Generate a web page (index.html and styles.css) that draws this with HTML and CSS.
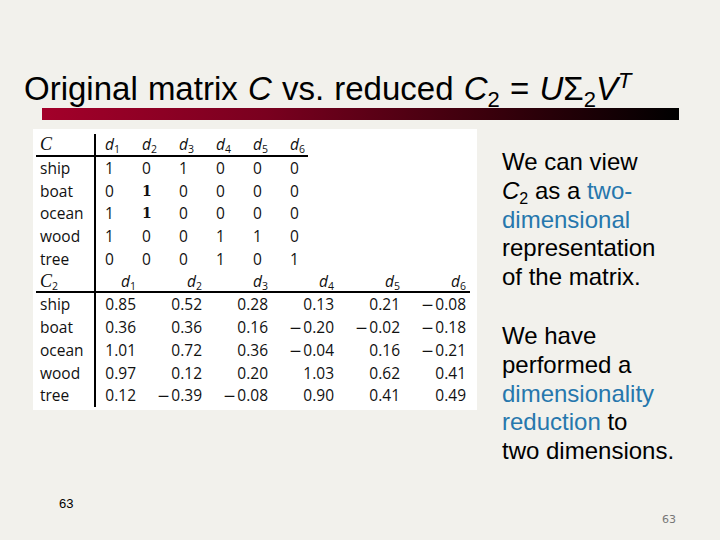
FILE: index.html
```html
<!DOCTYPE html>
<html>
<head>
<meta charset="utf-8">
<link rel="stylesheet" href="styles.css">
</head>
<body>
<div class="slide">
  <h1 class="title">Original matrix <i>C</i> vs. reduced <i>C</i><sub>2</sub> = <i>U</i>Σ<sub>2</sub><i>V</i><sup><i>T</i></sup></h1>
  <div class="bar"></div>
  <div class="content">
    <div class="matrix">
      <div class="grid g1">
        <div class="lab hd"><span class="mc">C</span></div>
        <div class="hd"><i>d</i><sub>1</sub></div>
        <div class="hd"><i>d</i><sub>2</sub></div>
        <div class="hd"><i>d</i><sub>3</sub></div>
        <div class="hd"><i>d</i><sub>4</sub></div>
        <div class="hd"><i>d</i><sub>5</sub></div>
        <div class="hd"><i>d</i><sub>6</sub></div>

        <div class="lab">ship</div><div>1</div><div>0</div><div>1</div><div>0</div><div>0</div><div>0</div>
        <div class="lab">boat</div><div>0</div><div class="one">1</div><div>0</div><div>0</div><div>0</div><div>0</div>
        <div class="lab">ocean</div><div>1</div><div class="one">1</div><div>0</div><div>0</div><div>0</div><div>0</div>
        <div class="lab">wood</div><div>1</div><div>0</div><div>0</div><div>1</div><div>1</div><div>0</div>
        <div class="lab">tree</div><div>0</div><div>0</div><div>0</div><div>1</div><div>0</div><div>1</div>
      </div>
      <div class="grid g2">
        <div class="lab hd"><span class="mc">C</span><sub>2</sub></div>
        <div class="hd"><i>d</i><sub>1</sub></div>
        <div class="hd"><i>d</i><sub>2</sub></div>
        <div class="hd"><i>d</i><sub>3</sub></div>
        <div class="hd"><i>d</i><sub>4</sub></div>
        <div class="hd"><i>d</i><sub>5</sub></div>
        <div class="hd"><i>d</i><sub>6</sub></div>

        <div class="lab">ship</div><div>0.85</div><div>0.52</div><div>0.28</div><div>0.13</div><div>0.21</div><div><span class="neg">−</span>0.08</div>
        <div class="lab">boat</div><div>0.36</div><div>0.36</div><div>0.16</div><div><span class="neg">−</span>0.20</div><div><span class="neg">−</span>0.02</div><div><span class="neg">−</span>0.18</div>
        <div class="lab">ocean</div><div>1.01</div><div>0.72</div><div>0.36</div><div><span class="neg">−</span>0.04</div><div>0.16</div><div><span class="neg">−</span>0.21</div>
        <div class="lab">wood</div><div>0.97</div><div>0.12</div><div>0.20</div><div>1.03</div><div>0.62</div><div>0.41</div>
        <div class="lab">tree</div><div>0.12</div><div><span class="neg">−</span>0.39</div><div><span class="neg">−</span>0.08</div><div>0.90</div><div>0.41</div><div>0.49</div>
      </div>
    </div>
    <div class="notes">
      <p>We can view<br><i>C</i><sub>2</sub> as a <span class="hl">two-<br>dimensional</span><br>representation<br>of the matrix.</p>
      <p>We have<br>performed a<br><span class="hl">dimensionality<br>reduction</span> to<br>two dimensions.</p>
    </div>
  </div>
  <div class="footer">
    <span class="num-left">63</span>
    <span class="num-right">63</span>
  </div>
</div>
</body>
</html>
```

FILE: styles.css
```css
html, body {
  margin: 0;
  padding: 0;
  background: #f2f1ec;
}

.slide {
  width: 720px;
  height: 540px;
  padding-top: 69px;
  box-sizing: border-box;
  font-family: "Liberation Sans", Arial, sans-serif;
  color: #000;
}

.title {
  margin: 0 0 0 24px;
  height: 39px;
  font-size: 33px;
  font-weight: normal;
  line-height: 40px;
  word-spacing: 1px;
  white-space: nowrap;
}

.title sub,
.title sup {
  font-size: 22px;
  line-height: 0;
}
.title sub { vertical-align: -7px; }
.title sup { vertical-align: 12px; }

.bar {
  margin-left: 42px;
  width: 637px;
  height: 12px;
  background: linear-gradient(to right, #a3002a 0%, #7a001f 35%, #3a000c 70%, #000 100%);
}

.content {
  display: flex;
  margin-top: 9px;
  height: 337px;
}

.matrix {
  margin-left: 33px;
  width: 444px;
  height: 281px;
  box-sizing: border-box;
  padding: 5px 0 0 3px;
  background: #fff;
  font-family: "Open Sans", "DejaVu Sans", sans-serif;
  font-size: 15.5px;
  color: #111;
}

.grid {
  display: grid;
  grid-auto-rows: 22.75px;
  line-height: 22.75px;
}

.g1 {
  grid-template-columns: 60px 37px 37px 37px 37px 37px 27px;
}
.g1 > div:not(.lab) { padding-left: 9px; }

.g2 {
  grid-template-columns: 60px 44px 66px 66px 66px 66px 66px;
}
.g2 > div:not(.lab) {
  text-align: right;
  padding-right: 4px;
}

.grid > div {
  box-sizing: border-box;
  white-space: nowrap;
}

.lab {
  padding-left: 4px;
  border-right: 2px solid #000;
}

.hd {
  border-bottom: 2px solid #000;
  line-height: 21px;
}

.grid sub {
  font-size: 10.5px;
  line-height: 0;
  vertical-align: -3px;
}

.mc {
  font-family: "Liberation Serif", serif;
  font-style: italic;
  font-size: 18px;
}

.one {
  font-family: "DejaVu Serif", serif;
  font-weight: bold;
  font-size: 14px;
}

.neg {
  font-family: "DejaVu Sans", sans-serif;
  margin-right: 1px;
}

.notes {
  margin-left: 25px;
  margin-top: 19px;
  font-size: 24px;
  line-height: 28.8px;
  white-space: nowrap;
}

.notes p {
  margin: 0 0 30px 0;
}

.notes sub {
  font-size: 16px;
  line-height: 0;
  vertical-align: -5px;
}

.hl {
  color: #2677ad;
}

.footer {
  display: flex;
  justify-content: space-between;
  align-items: flex-start;
  padding: 31px 44px 0 59px;
}

.num-left {
  font-family: "Liberation Sans", sans-serif;
  font-size: 13px;
  line-height: 14px;
}

.num-right {
  margin-top: 16px;
  font-family: "DejaVu Sans", sans-serif;
  font-size: 11px;
  line-height: 14px;
  color: #777;
}
```
